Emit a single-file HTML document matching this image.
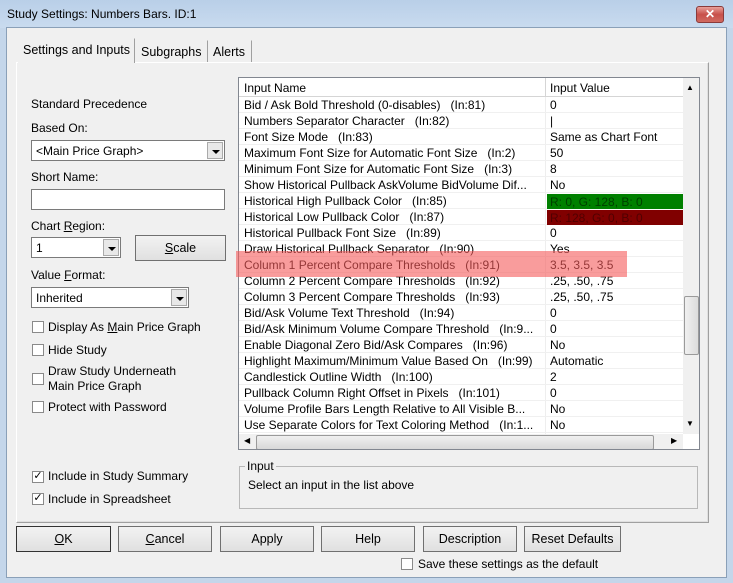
<!DOCTYPE html>
<html><head><style>
*{box-sizing:border-box;margin:0;padding:0}
body{width:733px;height:583px;background:#c4d6ea;font-family:"Liberation Sans",sans-serif;font-size:12px;color:#000;position:relative;overflow:hidden}
.a{position:absolute;white-space:nowrap}
.title{left:0;top:0;width:733px;height:28px;background:linear-gradient(#b9cfe8,#c9dbef)}
.client{left:6px;top:27px;width:721px;height:551px;background:#f0f0f0;border:1px solid #8aa0b8}
.panel{left:16px;top:62px;width:693px;height:461px;border:1px solid #a0a0a0;border-top-color:#fff;border-left-color:#fff;box-shadow:inset -1px -1px 0 #e0e0e0}
.tab{top:40px;height:22px;border:1px solid #a0a0a0;border-bottom:none;background:#f0f0f0;padding:4px 4px 0;font-size:12.5px}
.combo{background:#fff;border:1px solid #7a7a7a;height:21px;padding:3px 4px}
.dd{position:absolute;right:1px;top:1px;width:16px;height:17px;background:#e8e8e8;border:1px solid #aaa}
.dd:after{content:"";position:absolute;left:4px;top:7px;border-left:4px solid transparent;border-right:4px solid transparent;border-top:4px solid #000}
.btn{height:26px;border:1px solid #707070;background:linear-gradient(#f2f2f2,#e0e0e0);text-align:center;line-height:24px;font-size:12.5px}
.cb{width:12px;height:12px;border:1px solid #8a8a8a;background:#fff}
.list{left:238px;top:77px;width:462px;height:373px;border:1px solid #828790;background:#fff;overflow:hidden}
.row{position:absolute;left:0;width:444px;height:16px;border-bottom:1px solid #f0f0f0;line-height:17px;font-size:12px}
.row span{position:absolute;left:5px}
.row b{font-weight:normal;position:absolute;left:311px}
</style></head><body>
<div class="a title"></div>
<div class="a" style="left:7px;top:7px;font-size:12px;color:#000">Study Settings: Numbers Bars. ID:1</div>
<div class="a" style="left:696px;top:6px;width:28px;height:17px;border-radius:3px;border:1px solid #8a3a3a;background:linear-gradient(#e8a09a,#c8504a 50%,#d06a60);color:#fff;font-weight:bold;text-align:center;line-height:15px;font-size:12px">✕</div>
<div class="a client"></div>
<div class="a panel"></div>
<div class="a tab" style="left:18px;top:38px;height:25px;width:117px;border-color:#f0f0f0;border-right-color:#a0a0a0;z-index:2">Settings and Inputs</div>
<div class="a tab" style="left:136px;width:72px;border-color:#f0f0f0;border-right-color:#a0a0a0">Subgraphs</div>
<div class="a tab" style="left:208px;width:44px;border-color:#f0f0f0;border-right-color:#a0a0a0">Alerts</div>

<div class="a" style="left:31px;top:97px">Standard Precedence</div>
<div class="a" style="left:31px;top:121px">Based On:</div>
<div class="a combo" style="left:31px;top:140px;width:194px">&lt;Main Price Graph&gt;<div class="dd"></div></div>
<div class="a" style="left:31px;top:170px">Short Name:</div>
<div class="a combo" style="left:31px;top:189px;width:194px"></div>
<div class="a" style="left:31px;top:219px">Chart <u>R</u>egion:</div>
<div class="a combo" style="left:31px;top:237px;width:90px">1<div class="dd"></div></div>
<div class="a btn" style="left:135px;top:235px;width:91px"><u>S</u>cale</div>
<div class="a" style="left:31px;top:268px">Value <u>F</u>ormat:</div>
<div class="a combo" style="left:31px;top:287px;width:158px">Inherited<div class="dd"></div></div>
<div class="a cb" style="left:32px;top:321px"></div><div class="a" style="left:48px;top:320px">Display As <u>M</u>ain Price Graph</div>
<div class="a cb" style="left:32px;top:344px"></div><div class="a" style="left:48px;top:343px">Hide Study</div>
<div class="a cb" style="left:32px;top:373px"></div><div class="a" style="left:48px;top:364px;line-height:15px">Draw Study Underneath<br>Main Price Graph</div>
<div class="a cb" style="left:32px;top:401px"></div><div class="a" style="left:48px;top:400px">Protect with Password</div>
<div class="a cb" style="left:32px;top:471px;font-size:11px;line-height:9px;text-align:center">✓</div><div class="a" style="left:48px;top:469px">Include in Study Summary</div>
<div class="a cb" style="left:32px;top:493px;font-size:11px;line-height:9px;text-align:center">✓</div><div class="a" style="left:48px;top:492px">Include in Spreadsheet</div>

<div class="a list">
<div class="a" style="left:0;top:0;width:444px;height:19px;background:#fff;border-bottom:1px solid #d5d5d5"></div>
<div class="a" style="left:5px;top:3px">Input Name</div>
<div class="a" style="left:306px;top:0;width:1px;height:19px;background:#d5d5d5"></div>
<div class="a" style="left:311px;top:3px">Input Value</div>
<div class="a" style="left:306px;top:19px;width:1px;height:340px;background:#eee"></div>
<div class="row" style="top:19px"><span>Bid / Ask Bold Threshold (0-disables) &nbsp; (In:81)</span><b>0</b></div>
<div class="row" style="top:35px"><span>Numbers Separator Character &nbsp; (In:82)</span><b>|</b></div>
<div class="row" style="top:51px"><span>Font Size Mode &nbsp; (In:83)</span><b>Same as Chart Font</b></div>
<div class="row" style="top:67px"><span>Maximum Font Size for Automatic Font Size &nbsp; (In:2)</span><b>50</b></div>
<div class="row" style="top:83px"><span>Minimum Font Size for Automatic Font Size &nbsp; (In:3)</span><b>8</b></div>
<div class="row" style="top:99px"><span>Show Historical Pullback AskVolume BidVolume Dif...</span><b>No</b></div>
<div class="row" style="top:115px"><span>Historical High Pullback Color &nbsp; (In:85)</span><div class="a" style="left:308px;top:1px;width:136px;height:15px;background:#008000;color:#004000;padding-left:3px;line-height:16px">R: 0, G: 128, B: 0</div></div>
<div class="row" style="top:131px"><span>Historical Low Pullback Color &nbsp; (In:87)</span><div class="a" style="left:308px;top:1px;width:136px;height:15px;background:#800000;color:#500000;padding-left:3px;line-height:16px">R: 128, G: 0, B: 0</div></div>
<div class="row" style="top:147px"><span>Historical Pullback Font Size &nbsp; (In:89)</span><b>0</b></div>
<div class="row" style="top:163px"><span>Draw Historical Pullback Separator &nbsp; (In:90)</span><b>Yes</b></div>
<div class="row" style="top:179px"><span>Column 1 Percent Compare Thresholds &nbsp; (In:91)</span><b>3.5, 3.5, 3.5</b></div>
<div class="row" style="top:195px"><span>Column 2 Percent Compare Thresholds &nbsp; (In:92)</span><b>.25, .50, .75</b></div>
<div class="row" style="top:211px"><span>Column 3 Percent Compare Thresholds &nbsp; (In:93)</span><b>.25, .50, .75</b></div>
<div class="row" style="top:227px"><span>Bid/Ask Volume Text Threshold &nbsp; (In:94)</span><b>0</b></div>
<div class="row" style="top:243px"><span>Bid/Ask Minimum Volume Compare Threshold &nbsp; (In:9...</span><b>0</b></div>
<div class="row" style="top:259px"><span>Enable Diagonal Zero Bid/Ask Compares &nbsp; (In:96)</span><b>No</b></div>
<div class="row" style="top:275px"><span>Highlight Maximum/Minimum Value Based On &nbsp; (In:99)</span><b>Automatic</b></div>
<div class="row" style="top:291px"><span>Candlestick Outline Width &nbsp; (In:100)</span><b>2</b></div>
<div class="row" style="top:307px"><span>Pullback Column Right Offset in Pixels &nbsp; (In:101)</span><b>0</b></div>
<div class="row" style="top:323px"><span>Volume Profile Bars Length Relative to All Visible B...</span><b>No</b></div>
<div class="row" style="top:339px"><span>Use Separate Colors for Text Coloring Method &nbsp; (In:1...</span><b>No</b></div>
<div class="a" style="left:444px;top:0;width:17px;height:356px;background:#f0f0f0"></div>
<div class="a" style="left:447px;top:5px;font-size:8px">▲</div>
<div class="a" style="left:447px;top:341px;font-size:8px">▼</div>
<div class="a" style="left:445px;top:218px;width:15px;height:59px;border:1px solid #9a9a9a;border-radius:2px;background:linear-gradient(90deg,#f0f0f0,#dcdcdc)"></div>
<div class="a" style="left:0;top:356px;width:444px;height:17px;background:#f0f0f0"></div>
<div class="a" style="left:5px;top:358px;font-size:8px">◀</div>
<div class="a" style="left:432px;top:358px;font-size:8px">▶</div>
<div class="a" style="left:17px;top:357px;width:398px;height:15px;border:1px solid #9a9a9a;border-radius:2px;background:linear-gradient(#f0f0f0,#d8d8d8)"></div>
</div>
<div class="a" style="left:236px;top:251px;width:391px;height:26px;background:rgba(245,90,90,0.6)"></div>

<div class="a" style="left:239px;top:466px;width:459px;height:43px;border:1px solid #b8b8b8"></div>
<div class="a" style="left:245px;top:459px;background:#f0f0f0;padding:0 2px">Input</div>
<div class="a" style="left:248px;top:478px">Select an input in the list above</div>

<div class="a btn" style="left:16px;top:526px;width:95px;border-color:#333"><u>O</u>K</div>
<div class="a btn" style="left:118px;top:526px;width:94px"><u>C</u>ancel</div>
<div class="a btn" style="left:220px;top:526px;width:94px">Apply</div>
<div class="a btn" style="left:321px;top:526px;width:94px">Help</div>
<div class="a btn" style="left:423px;top:526px;width:94px">Description</div>
<div class="a btn" style="left:524px;top:526px;width:97px">Reset Defaults</div>
<div class="a cb" style="left:401px;top:558px"></div>
<div class="a" style="left:418px;top:557px">Save these settings as the default</div>
</body></html>
